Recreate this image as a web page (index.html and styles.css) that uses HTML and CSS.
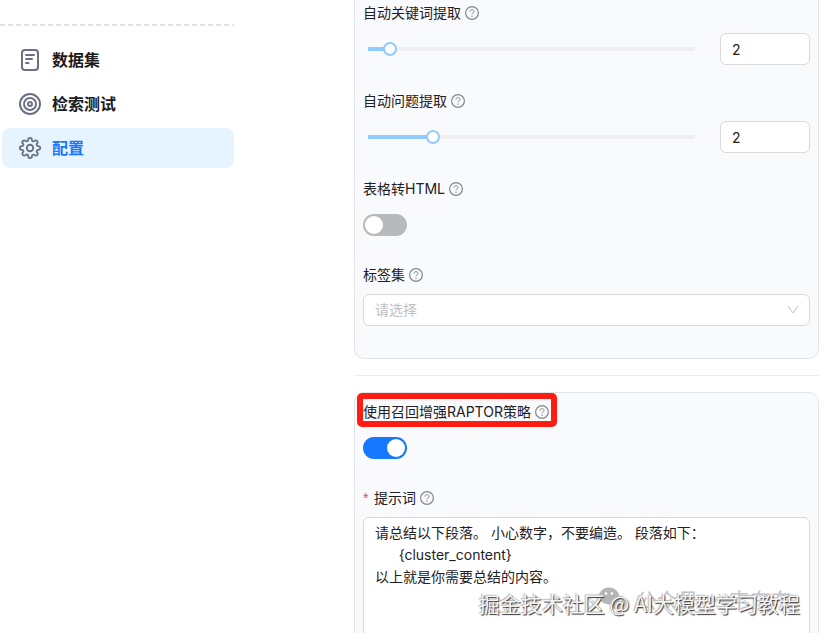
FILE: index.html
```
<!DOCTYPE html>
<html lang="zh-CN">
  <head>
    <meta charset="utf-8">
    <meta name="viewport" content="width=device-width, initial-scale=1">
    <title>配置</title>
    <link rel="stylesheet" href="styles.css">
  </head>
  <body>
    <!-- shared question mark icon -->
    <svg class="defs" width="0" height="0" aria-hidden="true">
      <symbol id="help" viewBox="0 0 14 14">
        <circle cx="7" cy="7" r="6.4" fill="none" stroke="currentColor" stroke-width="1.2"/>
        <path d="M5 5.6C5 4.3 5.9 3.6 7 3.6s2 .7 2 1.8c0 1.5-2 1.4-2 3" fill="none" stroke="currentColor"/>
        <circle cx="7" cy="10.2" r=".7" fill="currentColor"/>
      </symbol>
    </svg>

    <div class="page">
      <aside class="sidebar">
        <hr class="dashed">
        <nav class="menu">
          <a class="item" href="#dataset">
            <svg class="icon" viewBox="0 0 24 24">
              <rect x="4" y="2" width="16" height="20" rx="3"/>
              <path d="M8 7h8M8 11h6M8 15h2.500"/>
            </svg>
            数据集
          </a>
          <a class="item" href="#testing">
            <svg class="icon" viewBox="0 0 24 24">
              <circle cx="12" cy="12" r="10"/>
              <circle cx="12" cy="12" r="6"/>
              <circle cx="12" cy="12" r="2"/>
            </svg>
            检索测试
          </a>
          <a class="item active" href="#configuration">
            <svg class="icon" viewBox="-1 -1 26 26">
              <circle cx="12" cy="12" r="3.500"/>
              <path d="M19.400 15a1.650 1.650 0 0 0 .33 1.820l.06.06a2 2 0 1 1-2.830 2.830l-.06-.06a1.650 1.650 0 0 0-2.800 1.170V21a2 2 0 0 1-4 0v-.09a1.650 1.650 0 0 0-2.900-1.260l-.06.06a2 2 0 1 1-2.830-2.830l.06-.06A1.650 1.650 0 0 0 3.090 14H3a2 2 0 0 1 0-4h.09a1.650 1.650 0 0 0 1.260-2.820l-.06-.06a2 2 0 1 1 2.830-2.830l.06.06A1.650 1.650 0 0 0 10 3.090V3a2 2 0 0 1 4 0v.09a1.650 1.650 0 0 0 2.820 1.260l.06-.06a2 2 0 1 1 2.830 2.830l-.06.06A1.650 1.650 0 0 0 20.910 10H21a2 2 0 0 1 0 4h-.09a1.650 1.650 0 0 0-1.510 1z"/>
            </svg>
            配置
          </a>
        </nav>
      </aside>

      <main class="content">
        <form class="config">
          <section class="card card-top">
            <div class="field">
              <label class="label" for="keywords">自动关键词提取 <svg class="help"><use href="#help"/></svg></label>
              <div class="slider-row">
                <input class="slider keywords" id="keywords" type="range" min="0" max="30" value="2">
                <input class="number" type="text" inputmode="numeric" value="2" aria-label="自动关键词提取">
              </div>
            </div>
            <div class="field">
              <label class="label" for="questions">自动问题提取 <svg class="help"><use href="#help"/></svg></label>
              <div class="slider-row">
                <input class="slider questions" id="questions" type="range" min="0" max="10" value="2">
                <input class="number" type="text" inputmode="numeric" value="2" aria-label="自动问题提取">
              </div>
            </div>
            <div class="field">
              <label class="label" for="html4excel">表格转HTML <svg class="help"><use href="#help"/></svg></label>
              <input class="switch" id="html4excel" type="checkbox" role="switch">
            </div>
            <div class="field">
              <label class="label" for="tags">标签集 <svg class="help"><use href="#help"/></svg></label>
              <div class="select-wrap">
                <select class="select" id="tags">
                  <option>请选择</option>
                </select>
                <svg class="arrow" viewBox="0 0 12 12"><path d="M1 2l5 7 5-7"/></svg>
              </div>
            </div>
          </section>

          <hr class="divider">

          <section class="card card-raptor">
            <div class="field">
              <label class="label marked" for="raptor">使用召回增强RAPTOR策略 <svg class="help"><use href="#help"/></svg></label>
              <input class="switch" id="raptor" type="checkbox" role="switch" checked>
            </div>
            <div class="field">
              <label class="label" for="prompt"><span class="required">*</span>提示词 <svg class="help"><use href="#help"/></svg></label>
              <textarea class="prompt" id="prompt" rows="8">请总结以下段落。 小心数字，不要编造。 段落如下：
      {cluster_content}
以上就是你需要总结的内容。</textarea>
            </div>
          </section>
        </form>
      </main>
    </div>

    <div class="watermark source">
      <svg class="wechat" viewBox="0 0 28 24">
        <ellipse cx="11" cy="9" rx="10" ry="8.500"/>
        <ellipse cx="20" cy="15.500" rx="8" ry="7"/>
        <g fill="#fff"><circle cx="8" cy="6.500" r="1.300"/><circle cx="14" cy="6.500" r="1.300"/><circle cx="17.500" cy="13.500" r="1"/><circle cx="22.500" cy="13.500" r="1"/></g>
      </svg>
      <span>公众号 · 韦东东</span>
    </div>
    <div class="watermark community">掘金技术社区 @ AI大模型学习教程</div>
  </body>
</html>
```
FILE: styles.css
```
* {
  box-sizing: border-box;
}
body {
  margin: 0;
  background: #fff;
  color: #1f2023;
  font-family: Inter, "Noto Sans CJK SC", sans-serif;
  font-size: 14px;
  line-height: 22px;
}
.defs {
  position: absolute;
}
.page {
  display: flex;
  gap: 120px;
  height: 100vh;
  overflow: hidden;
}

/* sidebar */
.sidebar {
  flex: 0 0 234px;
  padding-top: 24px;
}
.dashed {
  margin: 0;
  height: 2px;
  border: 0;
  background: repeating-linear-gradient(90deg, #e2e2e2 0 5px, transparent 5px 8px);
}
.menu {
  display: flex;
  flex-direction: column;
  gap: 4px;
  padding: 14px 0 0 2px;
}
.item {
  display: flex;
  align-items: center;
  gap: 10px;
  height: 40px;
  padding: 0 16px;
  border-radius: 8px;
  color: #1b1b1d;
  font-size: 16px;
  font-weight: 600;
  text-decoration: none;
}
.item.active {
  background: #e6f4ff;
  color: #1677ff;
}
.icon {
  width: 24px;
  height: 24px;
  fill: none;
  stroke: #6b7085;
  stroke-width: 2;
  stroke-linecap: round;
  stroke-linejoin: round;
}

/* config form */
.content {
  flex: 1;
  min-width: 0;
}
.card {
  padding: 0 8px;
  border: 1px solid #e2e4e8;
  border-radius: 10px;
  background: #f9fafc;
}
.card-top {
  padding-top: 2px;
  padding-bottom: 32px;
  border-top: 0;
  border-radius: 0 0 10px 10px;
}
.card-raptor {
  padding-top: 8px;
}
.field {
  margin-bottom: 24px;
}
.field:last-child {
  margin-bottom: 0;
}
.label {
  display: flex;
  align-items: center;
  gap: 4px;
  width: fit-content;
  margin-bottom: 8px;
}
.help {
  width: 14px;
  height: 14px;
  color: #85878b;
}
.required {
  width: 7px;
  color: #e5484d;
  font-family: "Liberation Sans", sans-serif;
}
.slider-row {
  display: flex;
  align-items: center;
  gap: 18px;
  padding: 1px 0;
}
/* the track is inset by half a thumb on each side */
.slider {
  appearance: none;
  flex: 1;
  min-width: 0;
  height: 14px;
  margin: 0 0 0 -2px;
  background: linear-gradient(90deg, #91caff var(--fill), #f0f0f2 var(--fill)) center / calc(100% - 14px) 4px no-repeat;
}
.keywords {
  --fill: 7%;
}
.questions {
  --fill: 20%;
}
.slider::-webkit-slider-thumb {
  appearance: none;
  width: 14px;
  height: 14px;
  border: 2px solid #91caff;
  border-radius: 50%;
  background: #fff;
}
.number {
  width: 90px;
  height: 32px;
  padding: 0 11px;
  border: 1px solid #d9d9d9;
  border-radius: 6px;
  background: #fff;
  color: inherit;
  font: inherit;
}
.switch {
  appearance: none;
  display: block;
  width: 44px;
  height: 22px;
  margin: 14px 0 28px;
  padding: 2px;
  border-radius: 11px;
  background: #b8b9bb;
}
.switch::before {
  content: "";
  display: block;
  width: 18px;
  height: 18px;
  border-radius: 50%;
  background: #fff;
}
.switch:checked {
  background: #1677ff;
}
.switch:checked::before {
  margin-left: auto;
}
.select-wrap {
  position: relative;
}
.select {
  appearance: none;
  display: block;
  width: 100%;
  height: 32px;
  padding: 0 11px;
  border: 1px solid #d9d9d9;
  border-radius: 6px;
  background: #fff;
  color: #bfbfbf;
  font: inherit;
}
.arrow {
  position: absolute;
  top: 10px;
  right: 11px;
  width: 12px;
  height: 12px;
  fill: none;
  stroke: #bfbfbf;
  pointer-events: none;
}
.divider {
  height: 1px;
  margin: 16px 0;
  border: 0;
  background: #ececee;
}
/* red frame drawn over the label */
.marked {
  position: relative;
}
.marked::after {
  content: "";
  position: absolute;
  inset: -8px -8px -4px -6px;
  border: 6px solid #ff1c12;
  border-radius: 5px;
  pointer-events: none;
}
.prompt {
  display: block;
  width: 100%;
  padding: 4px 11px;
  border: 1px solid #d9d9d9;
  border-radius: 6px;
  background: #fff;
  color: inherit;
  font: inherit;
  resize: none;
}

/* watermarks over the page */
.watermark {
  position: absolute;
  display: flex;
  align-items: center;
  font-family: "Noto Sans CJK SC", sans-serif;
  font-size: 21px;
  white-space: nowrap;
  pointer-events: none;
}
.source {
  right: 27px;
  bottom: 22px;
  gap: 10px;
  color: #c4c4c4;
}
.wechat {
  width: 28px;
  height: 24px;
  fill: #b5b5b5;
}
.community {
  right: 19px;
  bottom: 19px;
  color: #f4f4f4;
  text-shadow: 1px 1px 1px #333, -1px -1px 1px #bbb;
}
```
